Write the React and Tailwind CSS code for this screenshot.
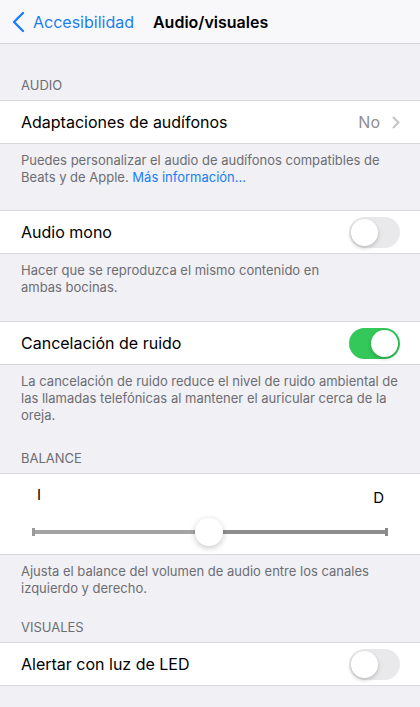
import React from "react";

const Toggle = ({ on }) => (
  <div
    className={`relative h-[31px] w-[51px] rounded-full ${
      on ? "bg-[#34c759]" : "bg-[#e9e9eb]"
    }`}
  >
    <div
      className={`absolute top-[2px] h-[27px] w-[27px] rounded-full bg-white shadow-[0_2px_4px_rgba(0,0,0,0.2)] ${
        on ? "left-[22px]" : "left-[2px]"
      }`}
    ></div>
  </div>
);

const Header = ({ children }) => (
  <div className="px-[21px] pb-[7px] text-[13px] uppercase leading-[16px] text-[#6d6d72]">
    {children}
  </div>
);

const Footer = ({ children }) => (
  <div className="px-[21px] pt-[8px] text-[13px] leading-[17px] text-[#6d6d72]">
    {children}
  </div>
);

const Row = ({ label, children }) => (
  <div className="flex h-[44px] items-center justify-between border-y border-[#d8d8dc] bg-white pl-[21px] pr-[20px]">
    <span className="text-[16px] text-black">{label}</span>
    {children}
  </div>
);

export default function App() {
  return (
    <div
      className="min-h-[707px] w-[420px] bg-[#f0f0f5]"
      style={{ fontFamily: "Inter, 'Liberation Sans', sans-serif" }}
    >
      <div className="flex h-[44px] items-center border-b border-[#d2d2d6] bg-[#f8f8fa]">
        <div className="flex items-center pl-[12px] text-[#1a7ef5]">
          <svg width="13" height="22" viewBox="0 0 13 22" fill="none">
            <path
              d="M11 2L2 11l9 9"
              stroke="#1a7ef5"
              strokeWidth="2.4"
              strokeLinecap="round"
              strokeLinejoin="round"
            />
          </svg>
          <span className="ml-[8px] text-[16px]">Accesibilidad</span>
        </div>
        <span className="ml-[19px] text-[16px] font-semibold text-black">
          Audio/visuales
        </span>
      </div>

      <div className="pt-[33px]">
        <Header>Audio</Header>
        <Row label="Adaptaciones de audífonos">
          <div className="flex items-center gap-[12px] text-[16px] text-[#8e8e93]">
            <span>No</span>
            <svg width="8" height="13" viewBox="0 0 8 13" fill="none">
              <path
                d="M1.5 1.5l5 5-5 5"
                stroke="#c4c4c7"
                strokeWidth="2"
                strokeLinecap="round"
                strokeLinejoin="round"
              />
            </svg>
          </div>
        </Row>
        <div className="px-[21px] pt-[8px] text-[13px] leading-[17px] text-[#6d6d72]">
          <p>Puedes personalizar el audio de audífonos compatibles de</p>
          <p>
            Beats y de Apple.{" "}
            <span className="text-[#1a7ef5]">Más información…</span>
          </p>
        </div>

        <div className="pt-[24px]">
          <Row label="Audio mono">
            <Toggle on={false} />
          </Row>
          <Footer>
            Hacer que se reproduzca el mismo contenido en
            <br />
            ambas bocinas.
          </Footer>
        </div>

        <div className="pt-[25px]">
          <Row label="Cancelación de ruido">
            <Toggle on={true} />
          </Row>
          <Footer>
            La cancelación de ruido reduce el nivel de ruido ambiental de las
            llamadas telefónicas al mantener el auricular cerca de la oreja.
          </Footer>
        </div>

        <div className="pt-[26px]">
          <Header>Balance</Header>
          <div className="border-y border-[#d8d8dc] bg-white px-[32px] pb-[8px] pt-[10px]">
            <div className="flex justify-between text-[15px] leading-[22px] text-black">
              <span className="pl-[5px]">I</span>
              <span className="pr-[4px] pt-[3px]">D</span>
            </div>
            <div className="relative mt-[9px] flex h-[28px] items-center">
              <div className="flex h-[4px] w-full rounded-full">
                <div className="h-full w-1/2 rounded-l-full bg-[#a3a3a3]"></div>
                <div className="h-full w-1/2 rounded-r-full bg-[#8e8e8e]"></div>
              </div>
              <div className="absolute left-0 h-[8px] w-[3px] bg-[#9a9a9a]"></div>
              <div className="absolute right-0 h-[8px] w-[3px] bg-[#8a8a8a]"></div>
              <div className="absolute left-[163px] h-[28px] w-[28px] rounded-full bg-white shadow-[0_2px_6px_rgba(0,0,0,0.22)]"></div>
            </div>
          </div>
          <Footer>
            Ajusta el balance del volumen de audio entre los canales
            <br />
            izquierdo y derecho.
          </Footer>
        </div>

        <div className="pt-[22px]">
          <Header>Visuales</Header>
          <Row label="Alertar con luz de LED">
            <Toggle on={false} />
          </Row>
        </div>
      </div>
    </div>
  );
}
